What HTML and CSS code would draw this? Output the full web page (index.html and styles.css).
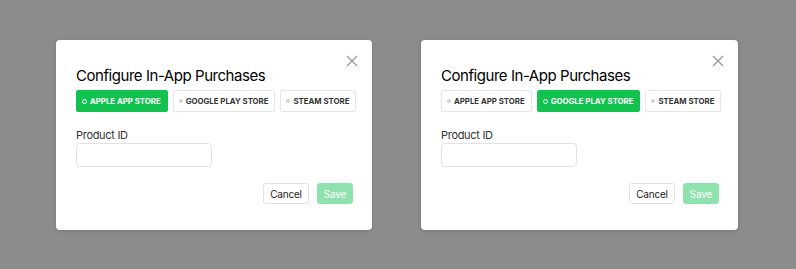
FILE: index.html
```html
<!DOCTYPE html>
<html>
<head>
<meta charset="utf-8">
<link rel="stylesheet" href="styles.css">
</head>
<body>
<div class="stage">
  <div class="modal m1">
    <button class="close" aria-label="Close"><svg width="12" height="12" viewBox="0 0 12 12"><path d="M1 1L11 11M11 1L1 11" stroke="#9a9a9a" stroke-width="1.4" fill="none"/></svg></button>
    <h2 class="title">Configure In-App Purchases</h2>
    <div class="tabs">
      <div class="tab active"><span class="dot"></span>APPLE APP STORE</div>
      <div class="tab"><span class="dot"></span>GOOGLE PLAY STORE</div>
      <div class="tab"><span class="dot"></span>STEAM STORE</div>
    </div>
    <label class="label">Product ID</label>
    <input class="input" type="text">
    <div class="actions">
      <button class="btn cancel">Cancel</button>
      <button class="btn save">Save</button>
    </div>
  </div>
  <div class="modal m2">
    <button class="close" aria-label="Close"><svg width="12" height="12" viewBox="0 0 12 12"><path d="M1 1L11 11M11 1L1 11" stroke="#9a9a9a" stroke-width="1.4" fill="none"/></svg></button>
    <h2 class="title">Configure In-App Purchases</h2>
    <div class="tabs">
      <div class="tab"><span class="dot"></span>APPLE APP STORE</div>
      <div class="tab active"><span class="dot"></span>GOOGLE PLAY STORE</div>
      <div class="tab"><span class="dot"></span>STEAM STORE</div>
    </div>
    <label class="label">Product ID</label>
    <input class="input" type="text">
    <div class="actions">
      <button class="btn cancel">Cancel</button>
      <button class="btn save">Save</button>
    </div>
  </div>
</div>
</body>
</html>
```
FILE: styles.css
```css
* { box-sizing: border-box; }
html, body {
  margin: 0;
  height: 100%;
  background: #8c8c8c;
  font-family: Inter, "Noto Sans", sans-serif;
}
.stage {
  display: flex;
  gap: 49px;
  padding: 40px 0 0 56px;
}
.modal {
  position: relative;
  background: #fff;
  border-radius: 4px;
  box-shadow: 0 1px 4px rgba(0,0,0,0.15);
  height: 190px;
  padding: 26px 19px 26px 20px;
  display: flex;
  flex-direction: column;
}
.m1 { width: 316px; }
.m2 { width: 317px; }
.close {
  position: absolute;
  top: 14px;
  right: 13px;
  width: 14px;
  height: 14px;
  padding: 1px;
  border: 0;
  background: none;
  display: flex;
  align-items: center;
  justify-content: center;
}
.title {
  margin: 0;
  font-size: 15px;
  line-height: 20px;
  font-weight: 400;
  color: #000;
  letter-spacing: -0.45px;
}
.tabs {
  display: flex;
  gap: 5px;
  margin-top: 4px;
}
.tab {
  height: 22px;
  display: flex;
  align-items: center;
  gap: 3px;
  padding: 0 6px 0 5px;
  border: 1px solid #e6e6e6;
  border-radius: 2px;
  font-size: 7.8px;
  font-weight: 700;
  color: #333;
  letter-spacing: 0;
  white-space: nowrap;
}
.tab .dot {
  width: 4px;
  height: 4px;
  border-radius: 50%;
  background: #d4d4d4;
}
.tab.active {
  background: #12c24f;
  border-color: #12c24f;
  color: #fff;
}
.tab.active .dot {
  background: transparent;
  border: 1px solid #fff;
  width: 5px;
  height: 5px;
}
.label {
  margin-top: 16px;
  margin-bottom: 1px;
  font-size: 11px;
  line-height: 14px;
  color: #333;
  letter-spacing: -0.3px;
}
.input {
  width: 136px;
  height: 24px;
  border: 1px solid #e2e2e2;
  border-radius: 4px;
  background: #fff;
  font: inherit;
}
.actions {
  margin-top: 16px;
  display: flex;
  justify-content: flex-end;
  gap: 8px;
}
.btn {
  height: 21px;
  border-radius: 3px;
  font-family: Inter, "Noto Sans", sans-serif;
  font-size: 10px;
  letter-spacing: -0.2px;
  padding: 0;
}
.cancel {
  width: 46px;
  background: #fff;
  border: 1px solid #e2e2e2;
  color: #222;
}
.save {
  width: 36px;
  background: #8ee2ae;
  border: 1px solid #8ee2ae;
  color: #fff;
}
```
